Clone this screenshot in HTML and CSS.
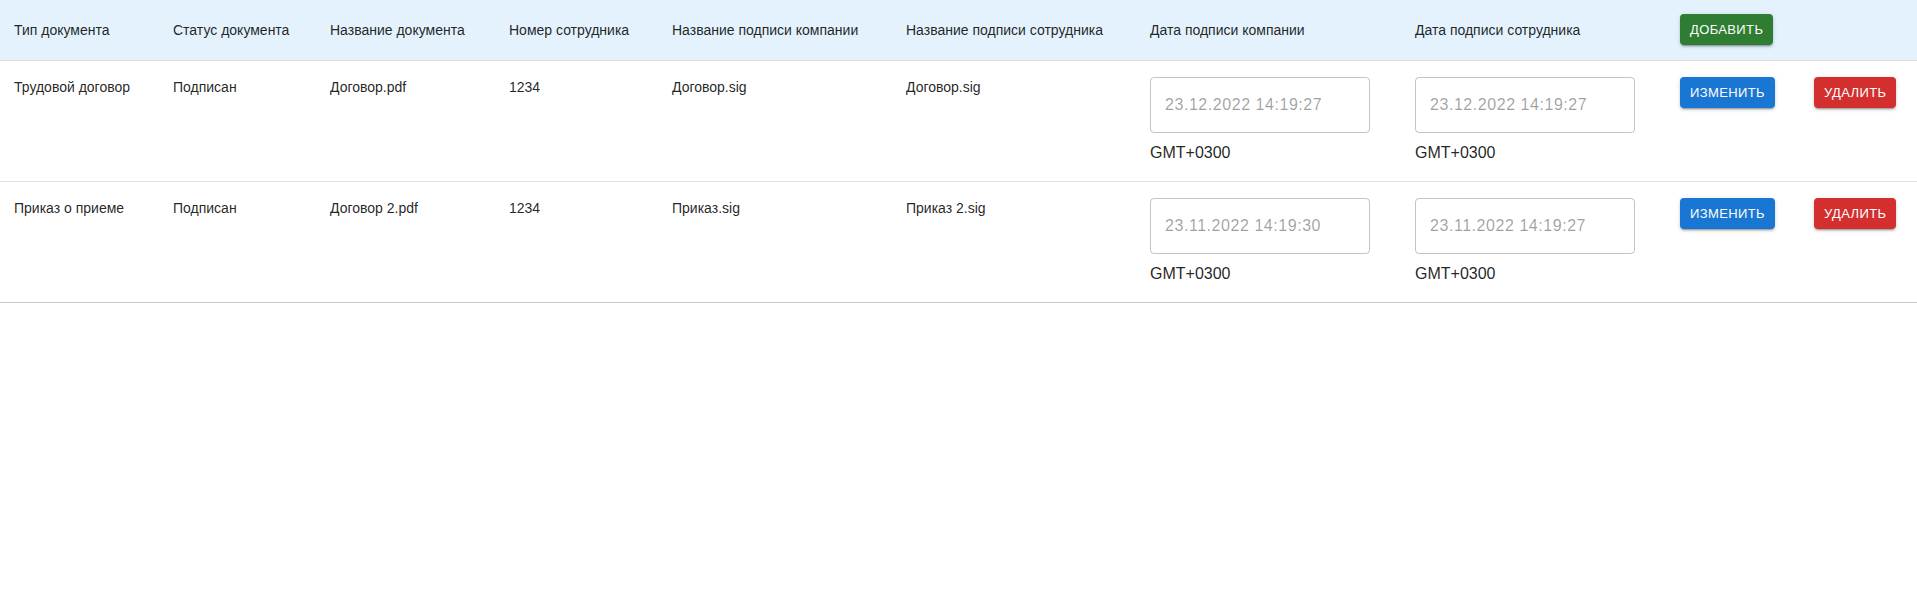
FILE: index.html
```html
<!DOCTYPE html>
<html lang="ru">
<head>
<meta charset="utf-8">
<title>Документы</title>
<link rel="stylesheet" href="styles.css">
</head>
<body>
<div class="paper">
  <table class="docs">
    <colgroup>
      <col class="w-type"><col class="w-status"><col class="w-name"><col class="w-num">
      <col class="w-csig"><col class="w-esig"><col class="w-cdate"><col class="w-edate">
      <col class="w-edit"><col class="w-del">
    </colgroup>
    <thead>
      <tr>
        <th>Тип документа</th>
        <th>Статус документа</th>
        <th>Название документа</th>
        <th>Номер сотрудника</th>
        <th>Название подписи компании</th>
        <th>Название подписи сотрудника</th>
        <th>Дата подписи компании</th>
        <th>Дата подписи сотрудника</th>
        <th><button class="btn btn-green">Добавить</button></th>
        <th></th>
      </tr>
    </thead>
    <tbody>
      <tr>
        <td>Трудовой договор</td>
        <td>Подписан</td>
        <td>Договор.pdf</td>
        <td>1234</td>
        <td>Договор.sig</td>
        <td>Договор.sig</td>
        <td><input class="date" type="text" value="23.12.2022 14:19:27" readonly><p class="tz">GMT+0300</p></td>
        <td><input class="date" type="text" value="23.12.2022 14:19:27" readonly><p class="tz">GMT+0300</p></td>
        <td><button class="btn btn-blue">Изменить</button></td>
        <td><button class="btn btn-red">Удалить</button></td>
      </tr>
      <tr>
        <td>Приказ о приеме</td>
        <td>Подписан</td>
        <td>Договор 2.pdf</td>
        <td>1234</td>
        <td>Приказ.sig</td>
        <td>Приказ 2.sig</td>
        <td><input class="date" type="text" value="23.11.2022 14:19:30" readonly><p class="tz">GMT+0300</p></td>
        <td><input class="date" type="text" value="23.11.2022 14:19:27" readonly><p class="tz">GMT+0300</p></td>
        <td><button class="btn btn-blue">Изменить</button></td>
        <td><button class="btn btn-red">Удалить</button></td>
      </tr>
    </tbody>
  </table>
</div>
</body>
</html>
```
FILE: styles.css
```css
html, body {
  margin: 0;
  padding: 0;
  background: #fff;
}
body {
  font-family: "Liberation Sans", Arial, sans-serif;
  color: rgba(0, 0, 0, 0.87);
}
.paper {
  background: #fff;
  box-shadow: 0 1px 1px rgba(0, 0, 0, 0.22), 0 2px 1px -1px rgba(0, 0, 0, 0.2), 0 1px 3px 0 rgba(0, 0, 0, 0.12);
}
.docs {
  width: 100%;
  table-layout: fixed;
  border-collapse: collapse;
  border-spacing: 0;
}
.w-type { width: 157px; }
.w-status { width: 157px; }
.w-name { width: 179px; }
.w-num { width: 163px; }
.w-csig { width: 234px; }
.w-esig { width: 244px; }
.w-cdate { width: 265px; }
.w-edate { width: 265px; }
.w-edit { width: 134px; }
.w-del { width: 119px; }

.docs th,
.docs td {
  font-size: 14px;
  line-height: 20px;
  font-weight: 400;
  text-align: left;
  border-bottom: 1px solid rgb(224, 224, 224);
  padding: 16px;
  color: rgba(0, 0, 0, 0.87);
}
.docs tbody tr:last-child td {
  border-bottom-color: rgb(200, 200, 200);
}
.docs th:first-child,
.docs td:first-child {
  padding-left: 14px;
}
.docs thead tr {
  background: #e3f2fd;
}
.docs th {
  padding-top: 14px;
  padding-bottom: 15px;
  vertical-align: middle;
  white-space: nowrap;
}
.docs td {
  vertical-align: top;
}
.date {
  display: block;
  box-sizing: border-box;
  width: 220px;
  height: 56px;
  margin: 0;
  padding: 16px 14px;
  border: 1px solid rgba(0, 0, 0, 0.23);
  border-radius: 4px;
  font-family: "Liberation Sans", Arial, sans-serif;
  font-size: 16px;
  line-height: 23px;
  letter-spacing: 0.55px;
  color: rgba(0, 0, 0, 0.38);
  background: transparent;
  outline: none;
}
.tz {
  margin: 8px 0 0;
  font-size: 16px;
  line-height: 24px;
  color: rgba(0, 0, 0, 0.87);
}
.btn {
  display: inline-block;
  box-sizing: border-box;
  height: 31px;
  margin: 0;
  padding: 4px 10px;
  border: 0;
  border-radius: 4px;
  font-family: "Liberation Sans", Arial, sans-serif;
  font-size: 13px;
  line-height: 23px;
  font-weight: 500;
  letter-spacing: 0.37px;
  text-transform: uppercase;
  color: #fff;
  cursor: pointer;
  box-shadow: 0 3px 1px -2px rgba(0, 0, 0, 0.2), 0 2px 2px 0 rgba(0, 0, 0, 0.14), 0 1px 5px 0 rgba(0, 0, 0, 0.12);
}
.btn-green { background: #2e7d32; }
.btn-blue { background: #1976d2; }
.btn-red { background: #d32f2f; }
```
